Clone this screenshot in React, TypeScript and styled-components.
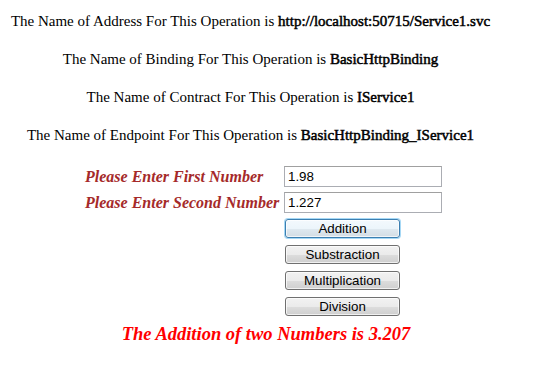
import React from 'react';
import styled, { createGlobalStyle } from 'styled-components';

const GlobalStyle = createGlobalStyle`
  html, body {
    margin: 0;
    padding: 0;
    background: #ffffff;
  }

  body {
    font-family: "Liberation Serif", "Times New Roman", serif;
    font-size: 16px;
    color: #000000;
  }
`;

const Page = styled.div`
  width: 550px;
  height: 369px;
  overflow: hidden;
  font-family: "Liberation Serif", "Times New Roman", serif;
`;

const InfoList = styled.div`
  width: 501px;
  padding-top: 12px;
  display: flex;
  flex-direction: column;
  gap: 20px;
`;

const InfoLine = styled.p`
  margin: 0;
  height: 18px;
  line-height: 18px;
  text-align: center;
  white-space: nowrap;
  font-family: "Liberation Serif", "Times New Roman", serif;
  font-size: 15px;
  color: #000000;
`;

const Value = styled.span`
  font-family: "Liberation Serif", "Times New Roman", serif;
  font-weight: normal;
  -webkit-text-stroke: 0.5px #000000;
`;

const Form = styled.div`
  margin: 22px 0 0 85px;
  display: grid;
  grid-template-columns: 199px 158px;
  row-gap: 5px;
  align-items: center;
`;

const Label = styled.label`
  font-family: "Liberation Serif", "Times New Roman", serif;
  font-weight: bold;
  font-style: italic;
  font-size: 16px;
  color: #a52a2a;
  white-space: nowrap;
`;

const Field = styled.input`
  box-sizing: border-box;
  width: 158px;
  height: 21px;
  margin: 0;
  padding: 1px 3px;
  border: 1px solid #abadb3;
  border-top-color: #a0a0a0;
  font-family: "Liberation Sans", Arial, sans-serif;
  font-size: 13.33px;
  color: #000000;
  background: #ffffff;
  outline: none;
`;

const Buttons = styled.div`
  grid-column: 2;
  display: flex;
  flex-direction: column;
  gap: 7px;
  padding-top: 1px;
  padding-left: 1px;
`;

const Button = styled.button<{ $active?: boolean }>`
  box-sizing: border-box;
  width: 115px;
  height: 19px;
  margin: 0;
  padding: 0;
  border: 1px solid ${(p) => (p.$active ? '#3c7fb1' : '#707070')};
  border-radius: 3px;
  background: linear-gradient(
    to bottom,
    ${(p) => (p.$active ? '#f3f9fd' : '#f2f2f2')} 0%,
    ${(p) => (p.$active ? '#ecf5fb' : '#ebebeb')} 50%,
    ${(p) => (p.$active ? '#dfe9f0' : '#dddddd')} 51%,
    ${(p) => (p.$active ? '#d3dde4' : '#cfcfcf')} 100%
  );
  box-shadow: ${(p) => (p.$active ? '0 0 0 1px #a6d8f5, inset 0 0 0 1px rgba(255, 255, 255, 0.7)' : 'inset 0 0 0 1px rgba(255, 255, 255, 0.7)')};
  font-family: "Liberation Sans", Arial, sans-serif;
  font-size: 13.33px;
  line-height: 17px;
  color: #000000;
  text-align: center;
  cursor: pointer;
`;

const Result = styled.div`
  margin-top: 8px;
  width: 532px;
  line-height: 21px;
  text-align: center;
  font-family: "Liberation Serif", "Times New Roman", serif;
  font-weight: bold;
  font-style: italic;
  font-size: 18.5px;
  color: #ff0000;
`;

const ops = ['Addition', 'Substraction', 'Multiplication', 'Division'];

export default function App() {
  return (
    <Page>
      <GlobalStyle />
      <InfoList>
        <InfoLine>
          The Name of Address For This Operation is <Value>http://localhost:50715/Service1.svc</Value>
        </InfoLine>
        <InfoLine>
          The Name of Binding For This Operation is <Value>BasicHttpBinding</Value>
        </InfoLine>
        <InfoLine>
          The Name of Contract For This Operation is <Value>IService1</Value>
        </InfoLine>
        <InfoLine>
          The Name of Endpoint For This Operation is <Value>BasicHttpBinding_IService1</Value>
        </InfoLine>
      </InfoList>
      <Form>
        <Label>Please Enter First Number</Label>
        <Field defaultValue="1.98" />
        <Label>Please Enter Second Number</Label>
        <Field defaultValue="1.227" />
        <Buttons>
          {ops.map((op, i) => (
            <Button key={op} $active={i === 0}>
              {op}
            </Button>
          ))}
        </Buttons>
      </Form>
      <Result>The Addition of two Numbers is 3.207</Result>
    </Page>
  );
}
